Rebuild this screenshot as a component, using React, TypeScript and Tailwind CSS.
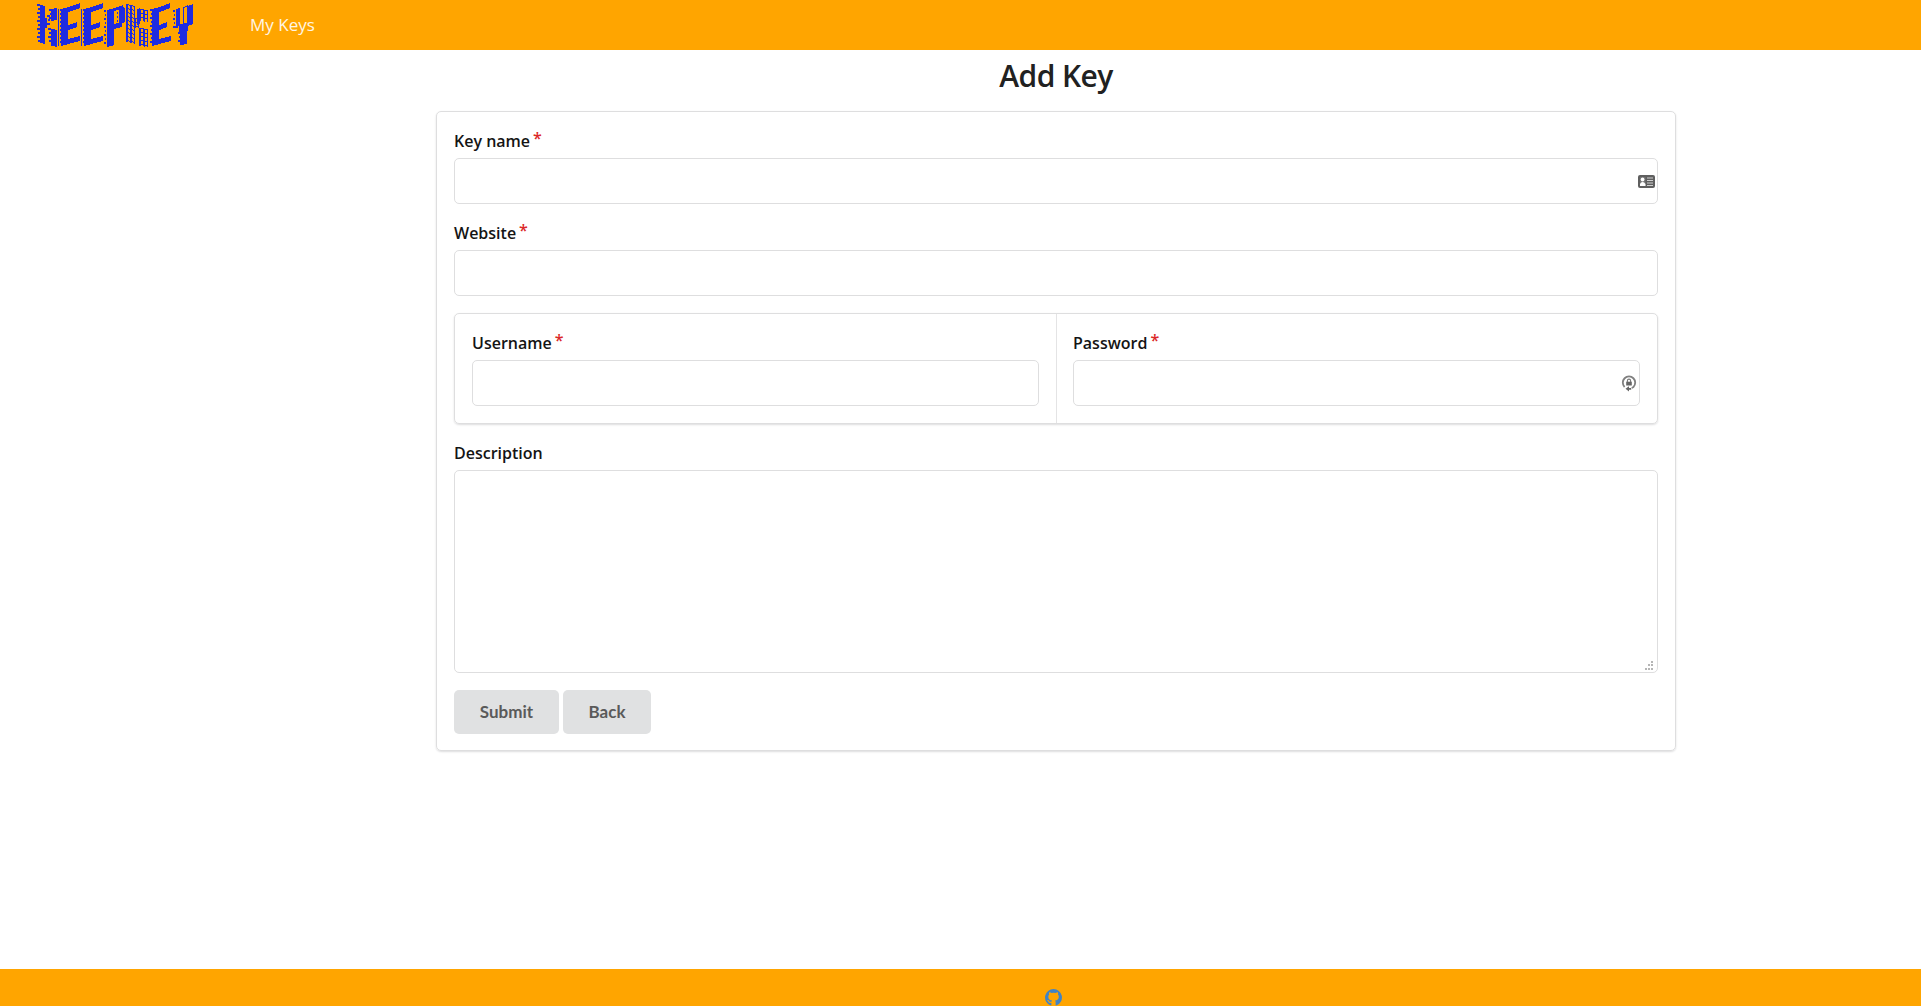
import React from "react";

type Stroke = {
  x: number;
  w: number;
  y: number;
  h: number;
  rise?: number;
  kind?: "solid" | "dots" | "windows";
};

const strokes: Stroke[] = [
  // first block
  { x: 37, w: 3, y: 4, h: 38, kind: "dots" },
  { x: 40, w: 5, y: 5, h: 38, rise: -1 },
  { x: 45, w: 2, y: 18, h: 10 },
  { x: 47, w: 3, y: 15, h: 10, kind: "dots" },
  { x: 49, w: 2, y: 9, h: 12, kind: "dots" },
  { x: 51, w: 6, y: 9, h: 12, rise: 1 },
  { x: 48, w: 3, y: 28, h: 16, kind: "dots" },
  { x: 51, w: 6, y: 29, h: 17, rise: -1 },
  // second block
  { x: 58, w: 1, y: 9, h: 37 },
  { x: 60, w: 1, y: 9, h: 36, kind: "dots" },
  { x: 61, w: 7, y: 9, h: 37, rise: 2 },
  { x: 68, w: 12, y: 7, h: 5, rise: 4 },
  { x: 68, w: 9, y: 25, h: 5, rise: 3 },
  { x: 68, w: 12, y: 39, h: 5, rise: 3 },
  // third block
  { x: 81, w: 1, y: 9, h: 37 },
  { x: 83, w: 1, y: 9, h: 36, kind: "dots" },
  { x: 84, w: 7, y: 9, h: 37, rise: 2 },
  { x: 91, w: 12, y: 7, h: 5, rise: 4 },
  { x: 91, w: 9, y: 25, h: 5, rise: 3 },
  { x: 91, w: 12, y: 39, h: 5, rise: 3 },
  // fourth block
  { x: 104, w: 2, y: 10, h: 35, kind: "dots" },
  { x: 107, w: 7, y: 10, h: 37, rise: 2 },
  { x: 114, w: 9, y: 8, h: 3, rise: 3 },
  { x: 117, w: 1, y: 12, h: 10, kind: "dots" },
  { x: 119, w: 5, y: 9, h: 16, rise: 3 },
  { x: 124, w: 1, y: 8, h: 14 },
  { x: 114, w: 8, y: 24, h: 5, rise: 2 },
  // fifth block
  { x: 126, w: 9, y: 4, h: 38, rise: -2, kind: "windows" },
  { x: 134, w: 5, y: 18, h: 10, kind: "windows" },
  { x: 139, w: 9, y: 9, h: 12, rise: -1, kind: "windows" },
  { x: 137, w: 3, y: 9, h: 16, rise: 1 },
  { x: 139, w: 9, y: 28, h: 18, rise: -1, kind: "windows" },
  // sixth block
  { x: 150, w: 2, y: 9, h: 36, kind: "dots" },
  { x: 152, w: 7, y: 9, h: 37, rise: 2 },
  { x: 159, w: 11, y: 7, h: 5, rise: 4 },
  { x: 159, w: 8, y: 25, h: 5, rise: 3 },
  { x: 159, w: 12, y: 39, h: 5, rise: 3 },
  // seventh block
  { x: 173, w: 2, y: 10, h: 17, kind: "dots" },
  { x: 176, w: 4, y: 9, h: 18, rise: 1 },
  { x: 175, w: 3, y: 26, h: 4, kind: "dots" },
  { x: 179, w: 9, y: 24, h: 8, rise: 1 },
  { x: 183, w: 1, y: 7, h: 17 },
  { x: 184, w: 4, y: 7, h: 1, rise: 2 },
  { x: 187, w: 6, y: 6, h: 20, rise: 2 },
  { x: 180, w: 7, y: 31, h: 14, rise: 1 },
  { x: 178, w: 2, y: 32, h: 12, kind: "dots" },
];

function Logo() {
  const cells: React.ReactElement[] = [];
  strokes.forEach((s, i) => {
    for (let c = 0; c < s.w; c++) {
      const x = s.x + c;
      const top = s.y - Math.round(((s.rise ?? 0) * c) / s.w);
      const cut = s.kind === "dots" || (s.kind === "windows" && c % 4 > 1);
      if (!cut) {
        cells.push(<rect key={`${i}-${c}`} x={x} y={top} width={1} height={s.h} />);
        continue;
      }
      const on = s.kind === "dots" ? 2 : 1;
      for (let y = 0; y < s.h; y += 4) {
        if (s.kind === "dots" && s.w > 1 && c === 0 && y % 8 === 4) continue;
        cells.push(<rect key={`${i}-${c}-${y}`} x={x} y={top + y} width={1} height={on} />);
      }
    }
  });
  return (
    <svg width="160" height="50" viewBox="35 0 160 50" fill="#1f2be0" shapeRendering="crispEdges" aria-label="KeepKey">
      {cells}
    </svg>
  );
}

function Label({ children, required = true }: { children: string; required?: boolean }) {
  return (
    <div className="flex h-[23px] text-[16px] leading-[23px] font-semibold text-[#141414]">
      <span>{children}</span>
      {required && <span className="-mt-[3px] ml-[3px] text-[#db2828]">*</span>}
    </div>
  );
}

function Field({ label, icon }: { label: string; icon?: React.ReactNode }) {
  return (
    <div>
      <Label>{label}</Label>
      <div className="mt-[5px] flex h-[46px] items-center justify-end rounded-[5px] border border-[#dededf] bg-white pr-[2px]">
        {icon}
      </div>
    </div>
  );
}

function CardIcon() {
  return (
    <svg width="17" height="13" viewBox="0 0 17 13">
      <rect width="17" height="13" rx="2" fill="#5f5f5f" />
      <rect x="2" y="2" width="5.5" height="9" fill="#757575" />
      <circle cx="4.6" cy="4.5" r="1.9" fill="#fff" />
      <path d="M2 11V9q.8-2 2.6-2t2.9 2v2z" fill="#fff" />
      <path d="M9 3h6M9 5.5h6M9 8h6M9 10.5h6" stroke="#d0d0d0" strokeWidth="1.1" />
    </svg>
  );
}

function LockIcon() {
  return (
    <svg width="16" height="17" viewBox="0 0 16 17" fill="none">
      <path d="M3.6 12A6.2 6.2 0 1 1 12.4 12l-1.6 1" stroke="#808080" strokeWidth="1.8" />
      <rect x="5.2" y="6.7" width="5.6" height="3.8" fill="#666" />
      <path d="M6.4 7V5.7a1.6 1.6 0 0 1 3.2 0V7" stroke="#777" strokeWidth="1.1" />
      <path d="M4.5 13.8 8 11.3v1.6h2.2v1.8H8v1.8z" fill="#666" />
    </svg>
  );
}

function GitHubIcon() {
  return (
    <svg width="17" height="17" viewBox="0 0 16 16" fill="#4183c4">
      <path d="M8 0a8 8 0 0 0-3 15.4c.5.1 1 .1 1-.4v-2c-2 .4-2.7-.6-2.9-1.2-.2-.4-.5-.8-.9-1-.3-.2-.2-.4.2-.4.7 0 1.2.6 1.4.9.7 1 1.6.9 2.3.6.1-.5.3-.8.6-1-2-.2-3.6-1-3.6-3.6 0-.9.3-1.6.8-2.2-.2-.6-.2-1.4.1-2.1.8 0 1.5.4 2.2.8a8 8 0 0 1 3.7 0c.7-.5 1.4-.8 2.2-.8.3.7.3 1.5.1 2.1.5.6.8 1.3.8 2.2 0 2.6-1.6 3.4-3.6 3.6.4.3.6.8.6 1.5V15c0 .5.5.5 1 .4A8 8 0 0 0 8 0z" />
    </svg>
  );
}

export default function App() {
  return (
    <div className="flex h-[1006px] w-full flex-col overflow-hidden bg-white font-['Open_Sans',sans-serif]">
      <header className="flex h-[50px] shrink-0 items-center bg-[#ffa500]">
        <div className="ml-[35px] h-[50px] w-[160px]">
          <Logo />
        </div>
        <a className="ml-[55px] text-[17px] leading-6 text-white/90">My Keys</a>
      </header>

      <main className="ml-[436px] w-[1240px] grow">
        <h1 className="flex h-[61px] items-start justify-center pt-[5px] text-[30px] leading-[42px] font-semibold tracking-[-0.6px] text-[#212121]">
          Add Key
        </h1>
        <form className="h-[640px] rounded-[5px] border border-[#dededf] px-[17px] pt-[18px] shadow-[0_1px_2px_0_rgba(34,36,38,0.15)]">
          <Field label="Key name" icon={<CardIcon />} />
          <div className="mt-[18px]">
            <Field label="Website" />
          </div>
          <div className="mt-[17px] grid h-[111px] grid-cols-2 rounded-[5px] border border-[#dededf] shadow-[0_1px_2px_0_rgba(34,36,38,0.15)]">
            <div className="px-[17px] pt-[18px]">
              <Field label="Username" />
            </div>
            <div className="border-l border-[#e4e4e5] pr-[17px] pl-[16px] pt-[18px]">
              <Field label="Password" icon={<LockIcon />} />
            </div>
          </div>
          <div className="mt-[18px]">
            <Label required={false}>Description</Label>
            <div className="mt-[5px] flex h-[203px] items-end justify-end rounded-[5px] border border-[#dededf] pr-[3px] pb-[1px]">
              <svg width="10" height="10" fill="#b5b5b5" shapeRendering="crispEdges">
                <path d="M7 0h2v2H7zM4 3h2v2H4zM7 3h2v2H7zM1 7h2v2H1zM4 7h2v2H4zM7 7h2v2H7z" />
              </svg>
            </div>
          </div>
          <div className="mt-[17px] flex gap-[4px] font-['Lato',sans-serif] text-[17px] font-bold text-[#5a5a5a]">
            <button type="button" className="h-[44px] w-[105px] rounded-[5px] bg-[#e0e1e2]">
              Submit
            </button>
            <button type="button" className="h-[44px] w-[88px] rounded-[5px] bg-[#e0e1e2]">
              Back
            </button>
          </div>
        </form>
      </main>

      <footer className="h-[37px] shrink-0 bg-[#ffa500] pt-[20px] pl-[1045px]">
        <GitHubIcon />
      </footer>
    </div>
  );
}
